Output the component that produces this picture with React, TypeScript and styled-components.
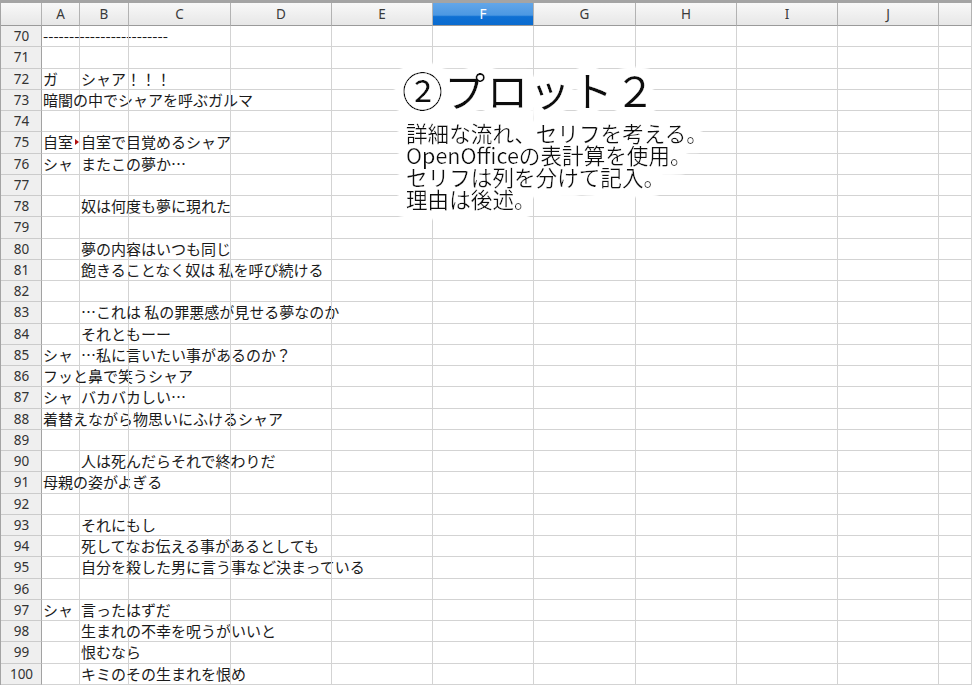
import React from 'react';
import styled, { createGlobalStyle } from 'styled-components';

const COLS = '42px 38px 49px 102px 101px 101px 101px 102px 101px 101px 101px 1fr';
const LETTERS = ['A', 'B', 'C', 'D', 'E', 'F', 'G', 'H', 'I', 'J', ''];
const SELECTED_COL = 'F';

type Line = { n: number; a?: string; b?: string; clipA?: boolean };

const rows: Line[] = [
  { n: 70, a: '------------------------' },
  { n: 71 },
  { n: 72, a: 'ガ', b: 'シャア！！！' },
  { n: 73, a: '暗闇の中でシャアを呼ぶガルマ' },
  { n: 74 },
  { n: 75, a: '自室', b: '自室で目覚めるシャア', clipA: true },
  { n: 76, a: 'シャ', b: 'またこの夢か…' },
  { n: 77 },
  { n: 78, b: '奴は何度も夢に現れた' },
  { n: 79 },
  { n: 80, b: '夢の内容はいつも同じ' },
  { n: 81, b: '飽きることなく奴は 私を呼び続ける' },
  { n: 82 },
  { n: 83, b: '…これは 私の罪悪感が見せる夢なのか' },
  { n: 84, b: 'それともーー' },
  { n: 85, a: 'シャ', b: '…私に言いたい事があるのか？' },
  { n: 86, a: 'フッと鼻で笑うシャア' },
  { n: 87, a: 'シャ', b: 'バカバカしい…' },
  { n: 88, a: '着替えながら物思いにふけるシャア' },
  { n: 89 },
  { n: 90, b: '人は死んだらそれで終わりだ' },
  { n: 91, a: '母親の姿がよぎる' },
  { n: 92 },
  { n: 93, b: 'それにもし' },
  { n: 94, b: '死してなお伝える事があるとしても' },
  { n: 95, b: '自分を殺した男に言う事など決まっている' },
  { n: 96 },
  { n: 97, a: 'シャ', b: '言ったはずだ' },
  { n: 98, b: '生まれの不幸を呪うがいいと' },
  { n: 99, b: '恨むなら' },
  { n: 100, b: 'キミのその生まれを恨め' },
];

const GlobalStyle = createGlobalStyle`
  html, body {
    margin: 0;
    padding: 0;
    background: #fff;
  }
  body {
    width: 972px;
    height: 685px;
    overflow: hidden;
  }
`;

const Sheet = styled.div`
  position: relative;
  box-sizing: border-box;
  width: 972px;
  height: 685px;
  overflow: hidden;
  border-top: 3px solid #a4a4a4;
  border-left: 1px solid #a4a4a4;
  background: #fff;
`;

const FilterDefs = styled.svg`
  position: absolute;
  width: 0;
  height: 0;
`;

const HeaderRow = styled.div`
  display: grid;
  grid-template-columns: ${COLS};
  height: 23px;
  margin-left: -1px;
`;

const ColHead = styled.div<{ $selected?: boolean }>`
  box-sizing: border-box;
  display: flex;
  align-items: center;
  justify-content: center;
  border-right: 1px solid #b2b2b2;
  border-bottom: 1px solid #9a9a9a;
  background: ${p =>
    p.$selected
      ? 'linear-gradient(#63a6e8 0%, #4c98e2 55%, #0f70d3 62%, #0a6bcf 100%)'
      : 'linear-gradient(#f8f8f8, #e7e7e7)'};
  color: ${p => (p.$selected ? '#fff' : '#3a3a3a')};
  font: 13.5px "Noto Sans", "DejaVu Sans", sans-serif;
`;

const Row = styled.div`
  display: grid;
  grid-template-columns: ${COLS};
  height: 21.25px;
  margin-left: -1px;
`;

const RowHead = styled.div`
  box-sizing: border-box;
  display: flex;
  align-items: center;
  justify-content: center;
  padding-left: 2px;
  border-right: 1px solid #a2a2a2;
  border-bottom: 1px solid #cbcbcb;
  background: #efefef;
  color: #333;
  font: 13.5px "Noto Sans", "DejaVu Sans", sans-serif;
`;

const Cell = styled.div<{ $clip?: boolean }>`
  box-sizing: border-box;
  position: ${p => (p.$clip ? 'relative' : 'static')};
  border-right: 1px solid #d3d3d3;
  border-bottom: 1px solid #d3d3d3;
  padding-left: 1px;
  color: #1a1a1a;
  font: 15px/20px "Noto Sans CJK JP", "Noto Sans", sans-serif;
  white-space: nowrap;
  overflow: ${p => (p.$clip ? 'hidden' : 'visible')};
  ${p =>
    p.$clip &&
    `&::after {
      content: '';
      position: absolute;
      right: 0;
      top: 7px;
      border-left: 4px solid #b01010;
      border-top: 3px solid transparent;
      border-bottom: 3px solid transparent;
    }`}
`;

const Note = styled.div`
  position: absolute;
  left: 396px;
  top: 58px;
  padding: 4px 0 6px;
  color: #111;
  font-family: "Noto Sans CJK JP", "Noto Sans", sans-serif;
  filter: url(#halo);
`;

const NoteTitle = styled.div`
  font-size: 41px;
  line-height: 48px;
  letter-spacing: 1.5px;
  padding-left: 5px;
`;

const NoteBody = styled.div`
  margin-top: 9px;
  padding-left: 9px;
  font-size: 21.6px;
  line-height: 22px;
  white-space: nowrap;
`;

export default function App() {
  return (
    <>
      <GlobalStyle />
      <Sheet>
        <FilterDefs aria-hidden="true">
          <filter id="halo" x="-15%" y="-25%" width="130%" height="150%">
            <feMorphology in="SourceAlpha" operator="dilate" radius="8" result="fat" />
            <feGaussianBlur in="fat" stdDeviation="2.5" result="soft" />
            <feComponentTransfer in="soft" result="mask">
              <feFuncA type="linear" slope="2.5" intercept="-0.4" />
            </feComponentTransfer>
            <feFlood floodColor="#fff" />
            <feComposite in2="mask" operator="in" result="glow" />
            <feMerge>
              <feMergeNode in="glow" />
              <feMergeNode in="SourceGraphic" />
            </feMerge>
          </filter>
        </FilterDefs>
        <HeaderRow>
          <ColHead />
          {LETTERS.map((l, i) => (
            <ColHead key={i} $selected={l === SELECTED_COL}>
              {l}
            </ColHead>
          ))}
        </HeaderRow>
        {rows.map(r => (
          <Row key={r.n}>
            <RowHead>{r.n}</RowHead>
            <Cell $clip={r.clipA}>{r.a}</Cell>
            <Cell>{r.b}</Cell>
            {LETTERS.slice(2).map((l, i) => (
              <Cell key={i} />
            ))}
          </Row>
        ))}
        <Note>
          <NoteTitle>②プロット２</NoteTitle>
          <NoteBody>
            <div>詳細な流れ、セリフを考える。</div>
            <div>OpenOfficeの表計算を使用。</div>
            <div>セリフは列を分けて記入。</div>
            <div>理由は後述。</div>
          </NoteBody>
        </Note>
      </Sheet>
    </>
  );
}
